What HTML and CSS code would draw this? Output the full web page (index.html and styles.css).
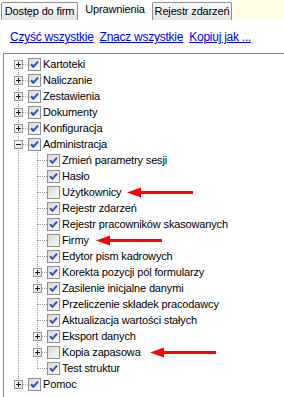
FILE: index.html
```html
<!DOCTYPE html>
<html lang="pl">
<head>
    <meta charset="UTF-8">
    <meta name="viewport" content="width=device-width, initial-scale=1.0">
    <title>Uprawnienia</title>
    <link rel="stylesheet" href="styles.css">
</head>
<body>

    <svg class="defs" width="0" height="0">
        <defs>
            <linearGradient id="cbFill" x1="0" y1="0" x2="1" y2="1">
                <stop offset="0" stop-color="#d9d9d4"/>
                <stop offset="1" stop-color="#fafafa"/>
            </linearGradient>
            <symbol id="cb-on" viewBox="0 0 13 13">
                <rect x="0.5" y="0.5" width="12" height="12" fill="url(#cbFill)" stroke="#8e8f8f"/>
                <path d="M3 6.3 5.4 8.8 10 3.6" fill="none" stroke="#2d4fc0" stroke-width="2"/>
            </symbol>
            <symbol id="cb-off" viewBox="0 0 13 13">
                <rect x="0.5" y="0.5" width="12" height="12" fill="url(#cbFill)" stroke="#8e8f8f"/>
            </symbol>
            <symbol id="arrow" viewBox="0 0 66 11">
                <path d="M0 5.5 14 0.5 14 10.5Z" fill="#ff0000"/>
                <rect x="13" y="4" width="53" height="3" fill="#ff0000"/>
            </symbol>
        </defs>
    </svg>

    <div class="tabs">
        <div class="tab tab-firms">Dostęp do firm</div>
        <div class="tab tab-active">Uprawnienia</div>
        <div class="tab tab-log">Rejestr zdarzeń</div>
        <div class="tabs-fill"></div>
    </div>

    <div class="links">
        <a href="#">Czyść wszystkie</a>
        <a href="#">Znacz wszystkie</a>
        <a href="#">Kopiuj jak ...</a>
    </div>

    <div class="tree-box">
        <ul class="tree">
            <li><div class="row"><span class="tw first"><i class="exp"></i></span><svg class="cb"><use href="#cb-on"/></svg><span class="lbl">Kartoteki</span></div></li>
            <li><div class="row"><span class="tw"><i class="exp"></i></span><svg class="cb"><use href="#cb-on"/></svg><span class="lbl">Naliczanie</span></div></li>
            <li><div class="row"><span class="tw"><i class="exp"></i></span><svg class="cb"><use href="#cb-on"/></svg><span class="lbl">Zestawienia</span></div></li>
            <li><div class="row"><span class="tw"><i class="exp"></i></span><svg class="cb"><use href="#cb-on"/></svg><span class="lbl">Dokumenty</span></div></li>
            <li><div class="row"><span class="tw"><i class="exp"></i></span><svg class="cb"><use href="#cb-on"/></svg><span class="lbl">Konfiguracja</span></div></li>
            <li>
                <div class="row"><span class="tw"><i class="exp minus"></i></span><svg class="cb"><use href="#cb-on"/></svg><span class="lbl">Administracja</span></div>
                <ul class="sub">
                    <li><div class="row"><span class="tw"></span><svg class="cb"><use href="#cb-on"/></svg><span class="lbl">Zmień parametry sesji</span></div></li>
                    <li><div class="row"><span class="tw"></span><svg class="cb"><use href="#cb-on"/></svg><span class="lbl">Hasło</span></div></li>
                    <li><div class="row"><span class="tw"></span><svg class="cb"><use href="#cb-off"/></svg><span class="lbl">Użytkownicy</span><svg class="arrow arrow-users"><use href="#arrow"/></svg></div></li>
                    <li><div class="row"><span class="tw"></span><svg class="cb"><use href="#cb-on"/></svg><span class="lbl">Rejestr zdarzeń</span></div></li>
                    <li><div class="row"><span class="tw"></span><svg class="cb"><use href="#cb-on"/></svg><span class="lbl">Rejestr pracowników skasowanych</span></div></li>
                    <li><div class="row"><span class="tw"></span><svg class="cb"><use href="#cb-off"/></svg><span class="lbl">Firmy</span><svg class="arrow arrow-firms"><use href="#arrow"/></svg></div></li>
                    <li><div class="row"><span class="tw"></span><svg class="cb"><use href="#cb-on"/></svg><span class="lbl">Edytor pism kadrowych</span></div></li>
                    <li><div class="row"><span class="tw"><i class="exp"></i></span><svg class="cb"><use href="#cb-on"/></svg><span class="lbl">Korekta pozycji pól formularzy</span></div></li>
                    <li><div class="row"><span class="tw"><i class="exp"></i></span><svg class="cb"><use href="#cb-on"/></svg><span class="lbl">Zasilenie inicjalne danymi</span></div></li>
                    <li><div class="row"><span class="tw"></span><svg class="cb"><use href="#cb-on"/></svg><span class="lbl">Przeliczenie składek pracodawcy</span></div></li>
                    <li><div class="row"><span class="tw"></span><svg class="cb"><use href="#cb-on"/></svg><span class="lbl">Aktualizacja wartości stałych</span></div></li>
                    <li><div class="row"><span class="tw"><i class="exp"></i></span><svg class="cb"><use href="#cb-on"/></svg><span class="lbl">Eksport danych</span></div></li>
                    <li><div class="row"><span class="tw"><i class="exp"></i></span><svg class="cb"><use href="#cb-off"/></svg><span class="lbl">Kopia zapasowa</span><svg class="arrow arrow-backup"><use href="#arrow"/></svg></div></li>
                    <li><div class="row"><span class="tw last"></span><svg class="cb"><use href="#cb-on"/></svg><span class="lbl">Test struktur</span></div></li>
                </ul>
            </li>
            <li><div class="row"><span class="tw last"><i class="exp"></i></span><svg class="cb"><use href="#cb-on"/></svg><span class="lbl">Pomoc</span></div></li>
        </ul>
    </div>

</body>
</html>
```

FILE: styles.css
```css
body {
    font-family: "Liberation Sans", Arial, sans-serif;
    font-size: 11px;
    background-color: #ffffff;
    color: #000000;
    margin: 0;
    height: 397px;
    overflow: hidden;
    display: flex;
    flex-direction: column;
}

.defs {
    display: block;
    width: 0;
    height: 0;
}

/* tabs */

.tabs {
    display: flex;
    align-items: flex-end;
    flex: none;
    height: 20px;
}

.tab {
    box-sizing: border-box;
    height: 18px;
    line-height: 16px;
    text-align: center;
    letter-spacing: -0.15px;
    border: 1px solid #8e8f8f;
    border-bottom: none;
    border-radius: 2px 2px 0 0;
    background: linear-gradient(#fbfbfb, #e3e3e3);
}

.tab-firms {
    width: 77px;
    margin-left: 1px;
}

.tab-active {
    width: 74px;
    height: 20px;
    line-height: 17px;
    border-color: #ffffff;
    background: #ffffff;
}

.tab-log {
    width: 80px;
}

.tabs-fill {
    flex: 1;
    height: 20px;
    background: #fffde6;
}

/* links */

.links {
    display: flex;
    flex: none;
    gap: 6px;
    margin: 9px 0 0 10px;
    height: 16px;
    line-height: 16px;
    font-size: 12px;
    letter-spacing: -0.25px;
}

.links a {
    color: #0000ff;
    text-decoration: underline;
}

/* tree */

.tree-box {
    flex: 1;
    min-height: 0;
    margin: 8px 0 0 3px;
    border-top: 1px solid #828790;
    border-left: 1px solid #828790;
    padding: 2px 0 0 5px;
}

.tree, .sub {
    list-style: none;
    margin: 0;
    padding: 0;
}

.sub {
    padding-left: 19px;
    background: repeating-linear-gradient(to bottom, #a0a0a0 0 1px, transparent 1px 2px) 9px 0 / 1px 100% no-repeat;
}

.row {
    display: flex;
    align-items: center;
    height: 16px;
    line-height: 16px;
    white-space: nowrap;
}

.tw {
    display: flex;
    align-items: center;
    flex: none;
    width: 19px;
    height: 16px;
    padding-left: 5px;
    box-sizing: border-box;
    background-image:
        repeating-linear-gradient(to right, #a0a0a0 0 1px, transparent 1px 2px),
        repeating-linear-gradient(to bottom, #a0a0a0 0 1px, transparent 1px 2px);
    background-size: 9px 1px, 1px 16px;
    background-position: 10px 8px, 9px 0;
    background-repeat: no-repeat;
}

.tw.first {
    background-size: 9px 1px, 1px 8px;
    background-position: 10px 8px, 9px 8px;
}

.tw.last {
    background-size: 9px 1px, 1px 9px;
    background-position: 10px 8px, 9px 0;
}

.exp {
    display: block;
    box-sizing: border-box;
    width: 9px;
    height: 9px;
    margin-top: 1px;
    border: 1px solid #919b9c;
    background:
        linear-gradient(#1a1a1a, #1a1a1a) center / 5px 1px no-repeat,
        linear-gradient(#1a1a1a, #1a1a1a) center / 1px 5px no-repeat,
        linear-gradient(135deg, #ffffff, #dedede);
}

.exp.minus {
    background:
        linear-gradient(#1a1a1a, #1a1a1a) center / 5px 1px no-repeat,
        linear-gradient(135deg, #ffffff, #dedede);
}

.cb {
    flex: none;
    width: 13px;
    height: 13px;
}

.lbl {
    margin-left: 2px;
    letter-spacing: -0.15px;
}

.arrow {
    flex: none;
    width: 66px;
    height: 11px;
}

.arrow-users {
    margin-left: 6px;
}

.arrow-firms {
    margin-left: 7px;
}

.arrow-backup {
    margin-left: 9px;
}
```
